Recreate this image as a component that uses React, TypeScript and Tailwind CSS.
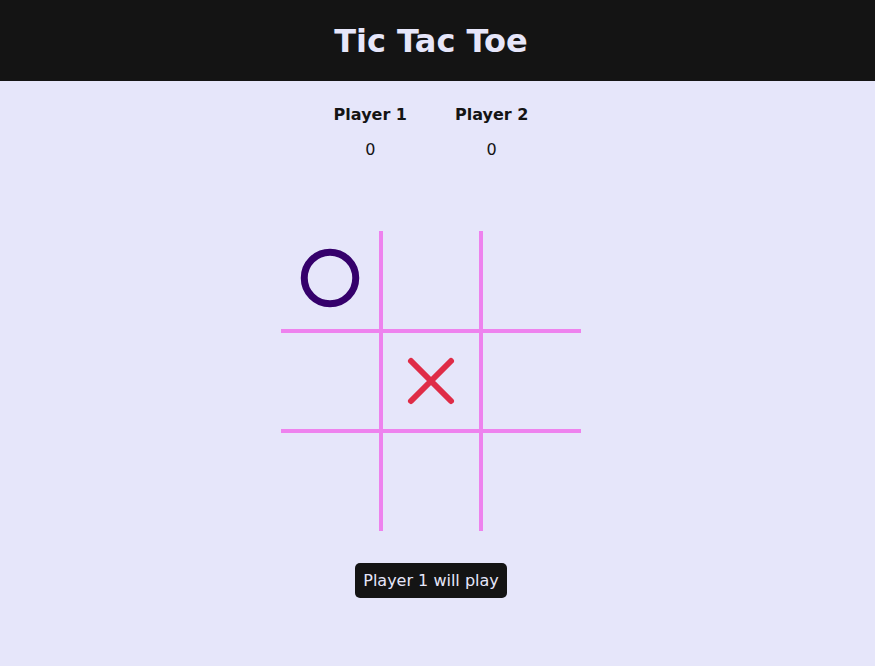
import React from "react";

const cells: (null | "O" | "X")[] = ["O", null, null, null, "X", null, null, null, null];

const borderCls = [
  "border-r-2 border-b-2",
  "border-l-2 border-r-2 border-b-2",
  "border-l-2 border-b-2",
  "border-r-2 border-t-2 border-b-2",
  "border-l-2 border-r-2 border-t-2 border-b-2",
  "border-l-2 border-t-2 border-b-2",
  "border-r-2 border-t-2",
  "border-l-2 border-r-2 border-t-2",
  "border-l-2 border-t-2",
];

function O() {
  return (
    <svg width="64" height="64" viewBox="0 0 64 64" className="-mt-1">
      <circle cx="32" cy="32" r="25.75" fill="none" stroke="#35006b" strokeWidth="7" />
    </svg>
  );
}

function X() {
  return (
    <svg width="50" height="50" viewBox="0 0 50 50">
      <path d="M5 5 L45 45 M45 5 L5 45" stroke="#df2c47" strokeWidth="6" strokeLinecap="round" />
    </svg>
  );
}

export default function App() {
  return (
    <div
      className="min-h-[666px] bg-[#e6e6fa] text-[#141414]"
      style={{ fontFamily: '"DejaVu Sans", sans-serif' }}
    >
      <header className="h-[81px] bg-[#141414] flex items-center justify-center pr-[13px]">
        <h1 className="text-[32px] font-bold text-[#e6e6fa] leading-none">Tic Tac Toe</h1>
      </header>
      <main className="flex flex-col items-center pr-[13px]">
        <div className="flex gap-12 mt-[24px]">
          <div className="flex flex-col items-center">
            <div className="text-base font-bold leading-5">Player 1</div>
            <div className="text-base leading-5 mt-[15px]">0</div>
          </div>
          <div className="flex flex-col items-center">
            <div className="text-base font-bold leading-5">Player 2</div>
            <div className="text-base leading-5 mt-[15px]">0</div>
          </div>
        </div>
        <div className="grid grid-cols-3 w-[300px] h-[300px] mt-[71px]">
          {cells.map((c, i) => (
            <div
              key={i}
              className={`box-border w-[100px] h-[100px] border-[#ee82ee] flex items-center justify-center ${borderCls[i]}`}
            >
              {c === "O" ? <O /> : c === "X" ? <X /> : null}
            </div>
          ))}
        </div>
        <div className="mt-8 bg-[#141414] text-[#e6e6fa] text-base rounded-[5px] px-2 h-[35px] flex items-center">
          Player 1 will play
        </div>
      </main>
    </div>
  );
}
